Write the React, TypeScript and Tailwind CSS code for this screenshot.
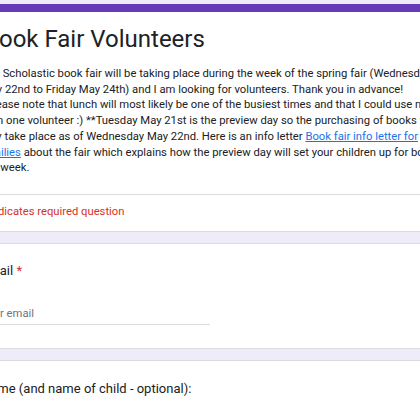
import React from "react";

export default function App() {
  const font = { fontFamily: "Roboto, 'Liberation Sans', Arial, sans-serif" };
  return (
    <div className="w-[420px] h-[420px] overflow-hidden bg-[#f0ebf8] pt-[4px]" style={font}>
      <div className="ml-[-44px] w-[560px] flex flex-col gap-[11px]">
        {/* Header card */}
        <div className="bg-white rounded-lg border border-[#dadce0] border-t-[8px] border-t-[#673ab7]">
          <div className="pl-[24px] pt-[11px] pb-[18px] border-b border-[#dadce0]">
            <h1 className="ml-[3px] text-[24px] leading-[32px] text-[#202124] whitespace-nowrap">Book Fair Volunteers</h1>
            <p className="mt-[11px] text-[11.25px] leading-[15.7px] text-[#202124] whitespace-nowrap">
              The Scholastic book fair will be taking place during the week of the spring fair (Wednesday
              <br />
              May 22nd to Friday May 24th) and I am looking for volunteers. Thank you in advance!
              <br />
              *Please note that lunch will most likely be one of the busiest times and that I could use more
              <br />
              than one volunteer :) **Tuesday May 21st is the preview day so the purchasing of books will
              <br />
              only take place as of Wednesday May 22nd. Here is an info letter{" "}
              <a className="text-[#1a73e8] underline">Book fair info letter for</a>
              <br />
              <a className="text-[#1a73e8] underline">families</a> about the fair which explains how the preview day will set your children up for book
              <br />
              fair week.
            </p>
          </div>
          <div className="pl-[24px] h-[36px] flex items-center text-[11.25px] text-[#d93025] whitespace-nowrap">
            * Indicates required question
          </div>
        </div>

        {/* Email card */}
        <div className="bg-white rounded-lg border border-[#dadce0] h-[106px] pl-[24px] pt-[18px]">
          <div className="text-[13px] leading-[18px] text-[#202124] whitespace-nowrap">
            Email <span className="text-[#d93025]">*</span>
          </div>
          <div className="mt-[27px] w-[229px] border-b border-[#dadce0] pb-[3px] text-[11.25px] leading-[14px] text-[#70757a] whitespace-nowrap">
            Your email
          </div>
        </div>

        {/* Name card */}
        <div className="bg-white rounded-lg border border-[#dadce0] h-[106px] pl-[24px] pt-[19px]">
          <div className="text-[13px] leading-[18px] text-[#202124] whitespace-nowrap">
            Name (and name of child - optional):
          </div>
        </div>
      </div>
    </div>
  );
}
